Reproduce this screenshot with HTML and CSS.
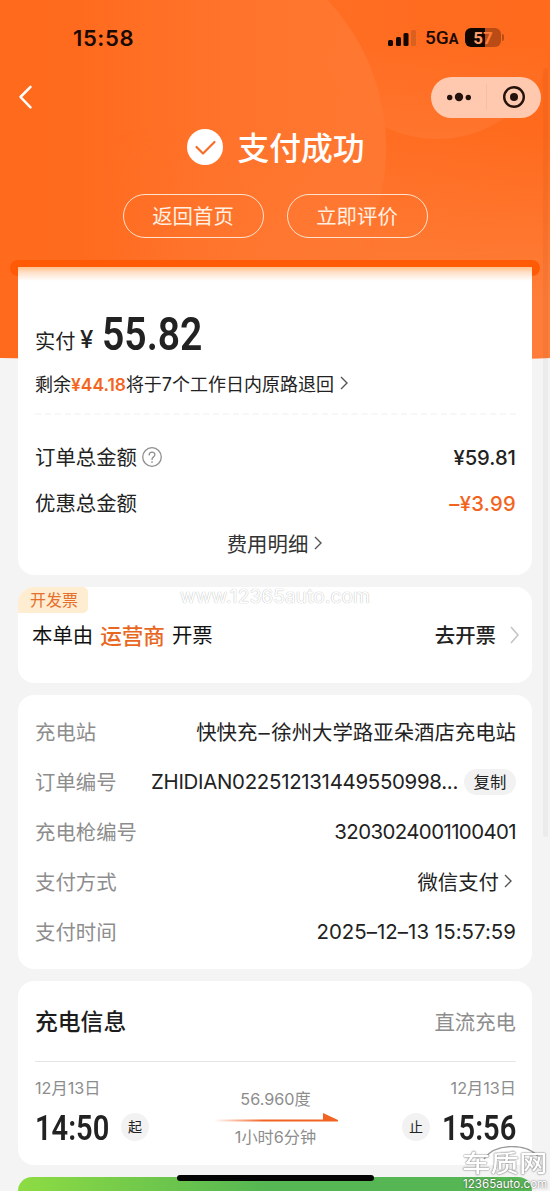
FILE: index.html
```html
<!DOCTYPE html>
<html lang="zh-CN">
<head>
<meta charset="utf-8">
<title>支付成功</title>
<link rel="stylesheet" href="styles.css">
</head>
<body>
<div class="page">
  <svg class="backdrop" width="550" height="362" viewBox="0 0 550 362">
    <defs>
      <linearGradient id="base" x1="0" y1="0" x2="1" y2="0"><stop offset="0" stop-color="#ff6a1c"/><stop offset=".55" stop-color="#ff6e24"/><stop offset="1" stop-color="#ff6a1c"/></linearGradient>
      <linearGradient id="disc" x1="0" y1="0" x2="1" y2="0"><stop offset=".3" stop-color="#ff7a35" stop-opacity="0"/><stop offset="1" stop-color="#ff7831"/></linearGradient>
      <linearGradient id="glow" x1="0" y1="0" x2="0" y2="1"><stop offset=".1" stop-color="#ff7d38" stop-opacity="0"/><stop offset=".75" stop-color="#ff7d38"/></linearGradient>
      <linearGradient id="side" x1="0" y1="0" x2="1" y2="0"><stop offset=".2" stop-color="#000"/><stop offset=".7" stop-color="#fff"/></linearGradient>
      <linearGradient id="dome" x1="0" y1="0" x2="0" y2="1"><stop offset=".6" stop-color="#ff7b36" stop-opacity="0"/><stop offset="1" stop-color="#ff7b36" stop-opacity=".6"/></linearGradient>
      <mask id="right"><rect width="550" height="362" fill="url(#side)"/></mask>
      <clipPath id="area"><path d="M0 0H550V358Q275 364 0 358Z"/></clipPath>
    </defs>
    <g clip-path="url(#area)">
      <rect width="550" height="362" fill="url(#base)"/>
      <g mask="url(#right)"><rect y="100" width="550" height="262" fill="url(#glow)"/></g>
      <circle cx="437" cy="20" r="119" fill="url(#dome)"/>
      <circle cx="169" cy="148" r="217" fill="url(#disc)"/>
    </g>
  </svg>

  <header class="status">
    <span class="clock">15:58</span>
    <svg width="28" height="18" viewBox="0 0 28 18"><rect x="0" y="11" width="5" height="6" rx="1.5"/><rect x="8" y="8" width="5" height="9" rx="1.5"/><rect x="15.500" y="4" width="5" height="13" rx="1.500"/><rect x="23" y="1" width="5" height="16" rx="1.500" fill="#d9601f"/></svg>
    <span class="net">5G<small>A</small></span>
    <span class="battery"><b>5</b><i>7</i></span><span class="nub"></span>
  </header>

  <nav class="nav">
    <svg width="16" height="26" viewBox="0 0 16 26" fill="none" stroke="#fff" stroke-width="2.500" stroke-linecap="round" stroke-linejoin="round"><path d="M12.500 1.800L2.500 12L12.500 22.300"/></svg>
    <div class="capsule">
      <svg width="110" height="41" viewBox="0 0 110 41"><circle cx="18.700" cy="20.500" r="2.700"/><circle cx="28" cy="20" r="4.200"/><circle cx="37.300" cy="20.500" r="2.700"/><path d="M55.500 7V33" stroke="#f3bfa7"/><circle cx="83" cy="20" r="9.800" fill="none" stroke="#24120c" stroke-width="2.400"/><circle cx="83" cy="20" r="4"/></svg>
    </div>
  </nav>

  <section class="result">
    <div class="headline">
      <svg width="36" height="36" viewBox="0 0 36 36"><circle cx="18" cy="18" r="18" fill="#fff"/><path d="M9.500 18L16 24.500L27.500 13" fill="none" stroke="#f56d2b" stroke-width="2.200" stroke-linecap="round" stroke-linejoin="round"/></svg>
      <h1>支付成功</h1>
    </div>
    <div class="actions"><span>返回首页</span><span>立即评价</span></div>
  </section>
  <div class="slot"></div>

  <main class="cards">
    <section class="card bill">
      <div class="paid"><span class="paid-label">实付</span><span class="yen">¥</span><span class="amount">55.82</span></div>
      <div class="refund"><span>剩余<b>¥44.18</b>将于7个工作日内原路退回</span><svg width="8" height="14" viewBox="0 0 8 14"><path class="chev" d="M1 1L7 7L1 13"/></svg></div>
      <div class="tear"></div>
      <div class="line"><span>订单总金额</span><svg width="20" height="20" viewBox="0 0 20 20" fill="none" stroke="#8f8f8f" stroke-width="1.300"><circle cx="10" cy="10" r="9.300"/><path d="M7.200 7.900C7.200 4.200 12.900 4.200 12.900 7.800C12.900 10 10 9.800 10 12.400" stroke-linecap="round"/><circle cx="10" cy="15" r=".5" fill="#8f8f8f" stroke-width=".7"/></svg><strong>¥59.81</strong></div>
      <div class="line"><span>优惠总金额</span><strong class="off">–¥3.99</strong></div>
      <div class="detail">费用明细<svg width="8" height="14" viewBox="0 0 8 14"><path class="chev" d="M1 1L7 7L1 13"/></svg></div>
    </section>

    <section class="card invoice">
      <span class="tag">开发票</span>
      <div class="issue"><span>本单由</span><b>运营商</b><span>开票</span><span class="go">去开票</span><svg width="9" height="18" viewBox="0 0 9 18"><path d="M1 1L8 9L1 17" fill="none" stroke="#c4c4c4" stroke-width="1.600"/></svg></div>
    </section>

    <section class="card order">
      <div class="row"><span>充电站</span><em class="name">快快充<u>–</u>徐州大学路亚朵酒店充电站</em></div>
      <div class="row"><span>订单编号</span><em class="serial">ZHIDIAN022512131449550998...</em><i class="copy">复制</i></div>
      <div class="row"><span>充电枪编号</span><em class="gun">3203024001100401</em></div>
      <div class="row"><span>支付方式</span><em class="pay">微信支付</em><svg width="8" height="14" viewBox="0 0 8 14"><path class="chev" d="M1 1L7 7L1 13"/></svg></div>
      <div class="row"><span>支付时间</span><em class="when">2025–12–13 15:57:59</em></div>
    </section>

    <section class="card charge">
      <div class="charge-head"><h2>充电信息</h2><span>直流充电</span></div>
      <div class="trip">
        <div class="stop"><span class="date">12月13日</span><div><span class="time">14:50</span><i>起</i></div></div>
        <div class="span">
          <span>56.960度</span>
          <svg width="124" height="10" viewBox="0 0 124 10"><defs><linearGradient id="ray"><stop offset="0" stop-color="#f26321" stop-opacity="0"/><stop offset=".4" stop-color="#f26321"/></linearGradient></defs><path d="M0 6.500H109V0L124 7V8.500H0Z" fill="url(#ray)"/></svg>
          <span>1小时6分钟</span>
        </div>
        <div class="stop end"><span class="date">12月13日</span><div><i>止</i><span class="time">15:56</span></div></div>
      </div>
    </section>

    <section class="promo"></section>
  </main>

  <div class="site">www.12365auto.com</div>
  <div class="scrollbar"></div>
  <div class="home"></div>
  <div class="mark">
    <svg width="90" height="44" viewBox="0 0 90 44" fill="none"><path d="M23 13C34 -3 64 -3 77 10" stroke="#999" stroke-width="1.400"/></svg>
    <span class="mark-name">车质网</span>
    <span class="mark-url">12365auto.com</span>
  </div>
</div>
</body>
</html>
```
FILE: styles.css
```css
* { box-sizing: border-box; }
body { margin: 0; background: #f4f4f4; color: #222; font-family: Inter, "Noto Sans CJK SC", sans-serif; font-size: 20.4px; }
h1, h2 { margin: 0; font-weight: 400; }
em, i { font-style: normal; }
svg { display: block; flex: none; }
span, em, i, b, strong { white-space: nowrap; }
.page { position: relative; width: 550px; height: 1191px; overflow: hidden; background: #f4f4f4; }
.backdrop { position: absolute; left: 0; top: 0; }
.status, .nav, .result, .slot, .cards { position: relative; }

.status { height: 77px; padding-left: 73px; display: flex; align-items: center; color: #1a0a04; }
.status svg { margin: -2px 0 0 255px; fill: #140700; }
.clock { width: 60px; padding-bottom: 2px; font-size: 22px; font-weight: 600; letter-spacing: .6px; }
.net { width: 31px; margin: 1px 0 0 9px; font: 500 19px/22px Roboto, sans-serif; }
.net small { font-size: 14.5px; font-weight: 700; }
.battery { width: 36px; height: 19px; margin: -3px 0 0 9px; border-radius: 6px; background: linear-gradient(90deg, #120600 55%, #b94c15 55%); color: #ff7c3a; font: 700 17px/20px Roboto, sans-serif; display: flex; justify-content: center; }
.battery b, .battery i { font-weight: 700; }
.battery b { color: #ff9c6b; }
.nub { width: 2px; height: 7px; margin: -2px 0 0 1px; border-radius: 0 2px 2px 0; background: #b94c15; }

.nav { height: 41px; padding: 0 9px 0 18px; display: flex; justify-content: space-between; align-items: center; }
.capsule { width: 110px; height: 41px; border-radius: 21px; background: #ffc9b0; }
.capsule svg { fill: #24120c; }

.result { height: 143px; padding-top: 10px; }
.headline { display: flex; justify-content: center; align-items: center; gap: 14px; height: 38px; padding-left: 2px; color: #fff; }
.headline h1 { padding-top: 2px; font-size: 31.8px; line-height: 37px; font-weight: 500; }
.actions { margin-top: 28px; display: flex; justify-content: center; gap: 23px; }
.actions span { width: 141px; height: 44px; border: 1.5px solid #ffe2cd; border-radius: 22px; color: #fff0e2; line-height: 43px; text-align: center; }

.slot { height: 16px; margin: -1px 10px -9px; border-radius: 8px; background: #ff5b06; }
.cards { padding: 0 18px; display: grid; gap: 12px; }
.card { background: #fff; border-radius: 16px; }
.chev { fill: none; stroke: #555; stroke-width: 1.4; }

.bill { height: 308px; padding: 39px 16px 0 17px; border-radius: 0 0 16px 16px; background: linear-gradient(#ffc18e, #ffe2cd 6px, #fff 14px); }
.paid { height: 57px; display: flex; align-items: baseline; }
.paid-label { width: 45px; font-size: 20.2px; transform: translateY(-1px); }
.yen { width: 22px; font-size: 24px; font-weight: 500; transform: translateY(-2px); }
.amount { font: 600 46px/57px Roboto, sans-serif; transform: scaleX(.85); transform-origin: left; }
.refund { height: 40px; padding-bottom: 1px; display: flex; align-items: center; gap: 6px; font-size: 18px; }
.refund b { color: #f4661f; font-weight: 600; font-size: 17.4px; }
.tear { height: 21px; border-top: 2px dashed #f7f7f7; margin-top: 10px; }
.line { height: 46px; display: flex; align-items: center; gap: 5px; }
.line span { padding-bottom: 3px; }
.line strong { margin-left: auto; font-weight: 500; font-size: 20.2px; }
.line .off { color: #f2641d; letter-spacing: .3px; }
.detail { height: 38px; padding-bottom: 4px; display: flex; align-items: center; justify-content: center; gap: 6px; margin-left: -2px; color: #333; }

.invoice { height: 96px; overflow: hidden; }
.tag { display: block; width: 70px; height: 26px; padding-left: 12px; background: #ffedd2; border-radius: 0 5px 5px 0; color: #e5702d; font-size: 16px; line-height: 27px; }
.issue { height: 44px; padding: 0 13px 1px 14px; display: flex; align-items: center; color: #111; }
.issue b { margin: 0 7px 1px; color: #e8681f; font-size: 21.6px; font-weight: 500; }
.issue .go { margin: 0 14px 0 auto; font-weight: 500; color: #222; }
.issue span { padding-bottom: 1px; }
.site { position: absolute; left: 180px; top: 584px; color: #fff; font: 19.3px/24px Inter, sans-serif; text-shadow: 0 0 1px #bbb, 0 0 1px #ccc; }

.order { height: 274px; padding: 12px 16px 0 17px; }
.row { height: 49.8px; display: flex; align-items: center; }
.row span { color: #8d8d8d; padding-bottom: 1px; }
.row em { margin-left: auto; }
.row .name { padding-bottom: 2px; }
.name u { display: inline-block; text-decoration: none; transform: scaleX(1.1); width: 14px; text-align: center; }
.row .pay { padding-bottom: 1px; }
.serial { letter-spacing: -.28px; }
.gun { letter-spacing: -.58px; }
.when { letter-spacing: .05px; }
.copy { margin-left: 6px; width: 52px; height: 26px; border-radius: 13px; background: #f2f2f2; font-size: 16.4px; line-height: 26px; text-align: center; }
.row svg { margin: 0 4px 0 5px; }

.charge { height: 184px; padding: 0 16px 0 17px; }
.charge-head { height: 81px; padding-bottom: 1px; display: flex; align-items: center; justify-content: space-between; border-bottom: 1.5px solid #e5e5e5; color: #8d8d8d; }
.charge-head h2 { font-size: 22.8px; font-weight: 500; color: #1c1c1c; }
.trip { display: flex; justify-content: space-between; padding-top: 14px; }
.stop { width: 114px; }
.date { display: block; font-size: 16.2px; line-height: 24px; color: #8d8d8d; }
.stop div { display: flex; align-items: center; height: 54px; }
.time { width: 74px; padding-top: 3px; font: 600 35px/54px Roboto, sans-serif; transform: scaleX(.83); transform-origin: left; }
.stop i { width: 28px; height: 28px; margin: 0 0 0 12px; border-radius: 50%; background: #f2f2f2; font-size: 14px; line-height: 28px; text-align: center; }
.end .date { text-align: right; }
.end i { margin: 0 12px 0 0; }
.span { display: grid; justify-items: center; align-content: start; padding-top: 11px; font-size: 16.2px; line-height: 24px; color: #8d8d8d; }
.span svg { margin: 2px 0 2px; }
.promo { height: 40px; border-radius: 14px 14px 0 0; background: linear-gradient(100deg, #8edc43, #55b653 48%, #55b653); }

.scrollbar { position: absolute; left: 543px; top: 68px; width: 5px; height: 769px; border-radius: 3px; background: rgba(0,0,0,.035); }
.home { position: absolute; left: 177px; top: 1175px; width: 197px; height: 6px; border-radius: 3px; background: #050505; }
.mark { position: absolute; left: 461px; top: 1146px; width: 89px; height: 45px; }
.mark svg { position: absolute; left: 0; top: 0; }
.mark-name { position: absolute; left: 1px; top: 4px; color: #fff; font: 500 28.5px/24px "Noto Sans CJK SC", sans-serif; transform: scaleY(.82); text-shadow: 0 0 2px #666, 0 0 1px #777; }
.mark-url { position: absolute; left: 2px; top: 32px; color: #fff; font: 11.6px/12px Inter, sans-serif; text-shadow: 0 0 2px #444; }
```
